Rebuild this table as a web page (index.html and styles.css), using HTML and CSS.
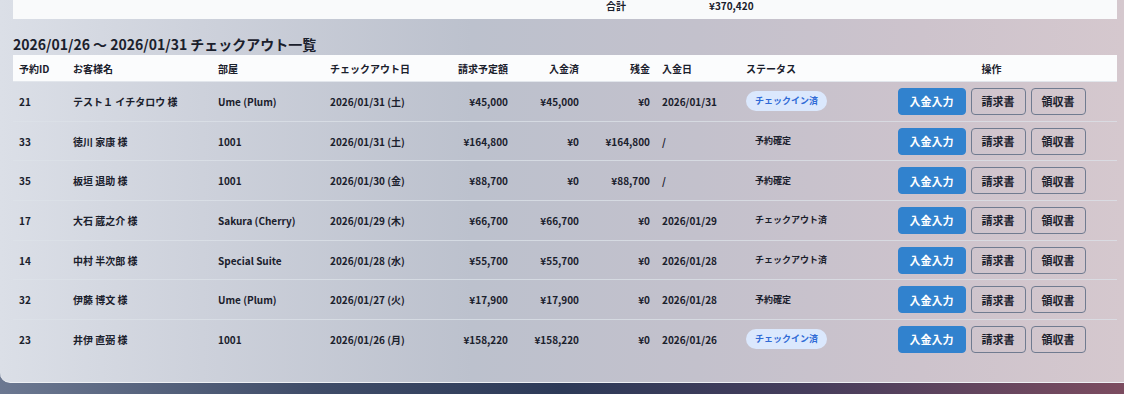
FILE: index.html
```html
<!DOCTYPE html>
<html lang="ja">
<head>
<meta charset="utf-8">
<link rel="stylesheet" href="styles.css">
</head>
<body>
<div class="panel">
  <div class="summary">
    <span class="sum-label">合計</span>
    <span class="sum-value">¥370,420</span>
  </div>
  <h2 class="title">2026/01/26 〜 2026/01/31 チェックアウト一覧</h2>
  <table class="list">
    <colgroup>
      <col class="c-id"><col class="c-name"><col class="c-room"><col class="c-date"><col class="c-bill"><col class="c-paid"><col class="c-rest"><col class="c-pdate"><col class="c-status"><col class="c-ops">
    </colgroup>
    <thead>
      <tr>
        <th>予約ID</th><th>お客様名</th><th>部屋</th><th>チェックアウト日</th>
        <th class="num">請求予定額</th><th class="num">入金済</th><th class="num">残金</th>
        <th>入金日</th><th>ステータス</th><th class="center">操作</th>
      </tr>
    </thead>
    <tbody>
      <tr>
        <td>21</td><td>テスト１ イチタロウ 様</td><td>Ume (Plum)</td><td>2026/01/31 (土)</td>
        <td class="num">¥45,000</td><td class="num">¥45,000</td><td class="num">¥0</td><td>2026/01/31</td>
        <td><span class="badge">チェックイン済</span></td>
        <td class="center"><div class="ops"><button class="btn primary">入金入力</button><button class="btn">請求書</button><button class="btn">領収書</button></div></td>
      </tr>
      <tr>
        <td>33</td><td>徳川 家康 様</td><td>1001</td><td>2026/01/31 (土)</td>
        <td class="num">¥164,800</td><td class="num">¥0</td><td class="num">¥164,800</td><td>/</td>
        <td><span class="status">予約確定</span></td>
        <td class="center"><div class="ops"><button class="btn primary">入金入力</button><button class="btn">請求書</button><button class="btn">領収書</button></div></td>
      </tr>
      <tr>
        <td>35</td><td>板垣 退助 様</td><td>1001</td><td>2026/01/30 (金)</td>
        <td class="num">¥88,700</td><td class="num">¥0</td><td class="num">¥88,700</td><td>/</td>
        <td><span class="status">予約確定</span></td>
        <td class="center"><div class="ops"><button class="btn primary">入金入力</button><button class="btn">請求書</button><button class="btn">領収書</button></div></td>
      </tr>
      <tr>
        <td>17</td><td>大石 蔵之介 様</td><td>Sakura (Cherry)</td><td>2026/01/29 (木)</td>
        <td class="num">¥66,700</td><td class="num">¥66,700</td><td class="num">¥0</td><td>2026/01/29</td>
        <td><span class="status">チェックアウト済</span></td>
        <td class="center"><div class="ops"><button class="btn primary">入金入力</button><button class="btn">請求書</button><button class="btn">領収書</button></div></td>
      </tr>
      <tr>
        <td>14</td><td>中村 半次郎 様</td><td>Special Suite</td><td>2026/01/28 (水)</td>
        <td class="num">¥55,700</td><td class="num">¥55,700</td><td class="num">¥0</td><td>2026/01/28</td>
        <td><span class="status">チェックアウト済</span></td>
        <td class="center"><div class="ops"><button class="btn primary">入金入力</button><button class="btn">請求書</button><button class="btn">領収書</button></div></td>
      </tr>
      <tr>
        <td>32</td><td>伊藤 博文 様</td><td>Ume (Plum)</td><td>2026/01/27 (火)</td>
        <td class="num">¥17,900</td><td class="num">¥17,900</td><td class="num">¥0</td><td>2026/01/28</td>
        <td><span class="status">予約確定</span></td>
        <td class="center"><div class="ops"><button class="btn primary">入金入力</button><button class="btn">請求書</button><button class="btn">領収書</button></div></td>
      </tr>
      <tr class="last">
        <td>23</td><td>井伊 直弼 様</td><td>1001</td><td>2026/01/26 (月)</td>
        <td class="num">¥158,220</td><td class="num">¥158,220</td><td class="num">¥0</td><td>2026/01/26</td>
        <td><span class="badge">チェックイン済</span></td>
        <td class="center"><div class="ops"><button class="btn primary">入金入力</button><button class="btn">請求書</button><button class="btn">領収書</button></div></td>
      </tr>
    </tbody>
  </table>
</div>
</body>
</html>
```

FILE: styles.css
```css
html, body {
  margin: 0;
  padding: 0;
}
body {
  width: 1124px;
  height: 394px;
  overflow: hidden;
  font-family: "Noto Sans CJK JP", "Noto Sans", sans-serif;
  color: #1a202c;
  background: linear-gradient(90deg, #6c7891 0%, #3f4c68 28%, #2d3a58 50%, #463d5c 72%, #7c4c60 100%);
}
.panel {
  box-sizing: border-box;
  height: 383px;
  padding: 0 7px 0 13px;
  background: linear-gradient(90deg, #dbdfe7 0%, #cdd1db 18%, #bcc1cd 42%, #c3c1cc 62%, #cdc3cc 82%, #d5c8ce 100%);
  border-bottom: 1px solid #eef0f4;
  border-radius: 0 0 0 10px;
}
.summary {
  display: flex;
  box-sizing: border-box;
  height: 19px;
  padding-top: 1px;
  background: #f9fafb;
  font-size: 10px;
  font-weight: 700;
  line-height: 10px;
}
.sum-label {
  margin-left: 593px;
  width: 103px;
}
.title {
  margin: 15px 0 1px;
  font-size: 14px;
  font-weight: 700;
  line-height: 20px;
  color: #1a202c;
}
.list {
  width: 1104px;
  table-layout: fixed;
  border-collapse: collapse;
  font-size: 10px;
  font-weight: 700;
}
.c-id { width: 54px; }
.c-name { width: 145px; }
.c-room { width: 112px; }
.c-date { width: 110px; }
.c-bill { width: 80px; }
.c-paid { width: 71px; }
.c-rest { width: 71px; }
.c-pdate { width: 84px; }
.c-status { width: 126px; }
.c-ops { width: 251px; }
.list th {
  height: 26px;
  padding: 0 6px;
  text-align: left;
  font-weight: 700;
  background: #fbfcfd;
  border-bottom: 1px solid #e2e6ec;
  white-space: nowrap;
}
.list td {
  height: 38.7px;
  padding: 0 6px;
  border-bottom: 1px solid rgba(220, 225, 232, 0.75);
  white-space: nowrap;
}
.list tr.last td {
  border-bottom: none;
}
.list .num { text-align: right; }
.list .center { text-align: center; }
.badge, .status {
  display: inline-block;
  height: 20px;
  line-height: 20px;
  padding: 0 9px;
  font-size: 9px;
  font-weight: 700;
  border-radius: 10px;
}
.badge {
  background: #dbe8fd;
  color: #2f6ad6;
}
.status {
  color: #1a202c;
}
.ops {
  display: flex;
  justify-content: center;
  gap: 5px;
}
.btn {
  box-sizing: border-box;
  height: 27px;
  padding: 0 10px;
  font-family: inherit;
  font-size: 11px;
  font-weight: 700;
  color: #1a202c;
  background: transparent;
  border: 1px solid #707b90;
  border-radius: 4px;
}
.btn.primary {
  padding: 0 11px;
  background: #3182ce;
  border-color: #3182ce;
  color: #ffffff;
}
```
